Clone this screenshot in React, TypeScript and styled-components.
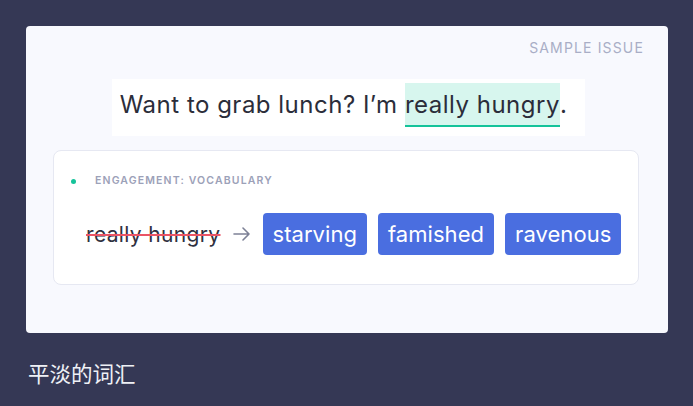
import React from "react";
import styled, { createGlobalStyle } from "styled-components";

const Global = createGlobalStyle`
  html, body { margin: 0; padding: 0; background: #353855; }
  body { font-family: Inter, "Noto Sans", "Noto Sans CJK SC", sans-serif; }
`;

const Page = styled.div`
  width: 693px;
  height: 406px;
  box-sizing: border-box;
  padding: 26px 25px 0 26px;
  display: flex;
  flex-direction: column;
`;

const Card = styled.div`
  height: 307px;
  box-sizing: border-box;
  background: #f8f9fe;
  border-radius: 4px;
  padding: 12px 24px 0 27px;
  display: flex;
  flex-direction: column;
`;

const Header = styled.div`
  display: flex;
  justify-content: flex-end;
  font-size: 14px;
  letter-spacing: 1.15px;
  color: #a9aec6;
  line-height: 16px;
  height: 16px;
  margin-top: 2px;
`;

const Sentence = styled.div`
  align-self: center;
  margin-top: 23px;
  background: #ffffff;
  padding: 4px 18px 9px 8px;
  font-size: 24px;
  font-weight: 400;
  color: #2b2d3a;
  line-height: 44px;
  letter-spacing: 0.5px;
  white-space: nowrap;
`;

const Highlight = styled.span`
  display: inline-block;
  background: #d7f6ee;
  box-shadow: inset 0 -2px 0 #15c39a;
  line-height: 44px;
`;

const Panel = styled.div`
  margin-top: 14px;
  margin-right: 5px;
  height: 135px;
  box-sizing: border-box;
  background: #ffffff;
  border: 1px solid #e6e8f2;
  border-radius: 8px;
  padding: 24px 18px 0 17px;
  display: flex;
  flex-direction: column;
`;

const Label = styled.div`
  display: flex;
  align-items: center;
  gap: 19px;
  font-size: 10.5px;
  font-weight: 600;
  letter-spacing: 1.15px;
  color: #9ca1b8;
  line-height: 12px;
`;

const Dot = styled.span`
  width: 5px;
  height: 5px;
  border-radius: 50%;
  background: #15c39a;
`;

const Row = styled.div`
  margin-top: 26px;
  display: flex;
  align-items: center;
  padding-left: 15px;
  white-space: nowrap;
`;

const Struck = styled.span`
  flex-shrink: 0;
  font-size: 21px;
  color: #2f3140;
  text-decoration: line-through;
  text-decoration-color: #ea5466;
  text-decoration-thickness: 2px;
  letter-spacing: 0.35px;
`;

const Arrow = styled.span`
  flex-shrink: 0;
  display: flex;
  margin: 0 13px 0 12px;
  color: #7d8196;
`;

const Choices = styled.div`
  display: flex;
  gap: 11px;
`;

const Choice = styled.button`
  flex-shrink: 0;
  font-family: inherit;
  border: none;
  background: #4a6ee0;
  color: #ffffff;
  height: 42px;
  padding: 0 10px;
  border-radius: 4px;
  font-size: 22px;
  line-height: 42px;
  letter-spacing: 0.05px;
`;

const Caption = styled.div`
  margin-top: 26px;
  margin-left: 2px;
  font-family: "Noto Sans CJK SC", sans-serif;
  font-size: 21.5px;
  color: #eef0f5;
  line-height: 28px;
`;

export default function App() {
  return (
    <>
      <Global />
      <Page>
        <Card>
          <Header>SAMPLE ISSUE</Header>
          <Sentence>
            Want to grab lunch? I’m <Highlight>really hungry</Highlight>.
          </Sentence>
          <Panel>
            <Label>
              <Dot />
              ENGAGEMENT: VOCABULARY
            </Label>
            <Row>
              <Struck>really hungry</Struck>
              <Arrow>
                <svg width="17" height="14" viewBox="0 0 17 14" fill="none" stroke="currentColor" strokeWidth="1.6" strokeLinecap="round" strokeLinejoin="round">
                  <path d="M1 7h15M10 1l6 6-6 6" />
                </svg>
              </Arrow>
              <Choices>
                <Choice>starving</Choice>
                <Choice>famished</Choice>
                <Choice>ravenous</Choice>
              </Choices>
            </Row>
          </Panel>
        </Card>
        <Caption>平淡的词汇</Caption>
      </Page>
    </>
  );
}
